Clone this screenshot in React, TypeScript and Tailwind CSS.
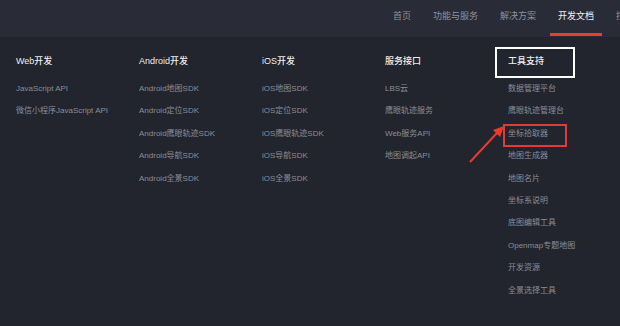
const nav = ["首页", "功能与服务", "解决方案", "开发文档", "控制台"];

const columns = [
  { title: "Web开发", items: ["JavaScript API", "微信小程序JavaScript API"] },
  {
    title: "Android开发",
    items: ["Android地图SDK", "Android定位SDK", "Android鹰眼轨迹SDK", "Android导航SDK", "Android全景SDK"],
  },
  {
    title: "iOS开发",
    items: ["iOS地图SDK", "iOS定位SDK", "iOS鹰眼轨迹SDK", "iOS导航SDK", "iOS全景SDK"],
  },
  { title: "服务接口", items: ["LBS云", "鹰眼轨迹服务", "Web服务API", "地图调起API"] },
  {
    title: "工具支持",
    items: [
      "数据管理平台",
      "鹰眼轨迹管理台",
      "坐标拾取器",
      "地图生成器",
      "地图名片",
      "坐标系说明",
      "底图编辑工具",
      "Openmap专题地图",
      "开发资源",
      "全景选择工具",
    ],
  },
];

export default function App() {
  return (
    <div
      className="relative h-[326px] w-[620px] overflow-hidden bg-[#22252d]"
      style={{ fontFamily: '"Liberation Sans", "Noto Sans CJK SC", sans-serif' }}
    >
      <header className="flex h-[37px] items-stretch gap-[6px] overflow-hidden whitespace-nowrap bg-[#292c37] pl-[385px]">
        {nav.map((n, i) => (
          <div
            key={n}
            className={`relative flex shrink-0 items-center px-2 pb-[3px] text-[9px] ${
              i === 3 ? "text-[#f2f2f2]" : "text-[#8d919b]"
            }`}
          >
            {n}
            {i === 3 && <span className="absolute bottom-[1px] left-0 right-0 h-[3px] bg-[#e5402f]" />}
          </div>
        ))}
      </header>

      <div className="flex pl-4 pt-[18px]">
        {columns.map((col, ci) => (
          <div key={col.title} className="flex w-[123px] shrink-0 flex-col gap-[11px]">
            <div className="relative text-[9px] font-medium leading-[12px] text-[#eeeeee]">
              {col.title}
              {ci === 4 && (
                <span className="absolute left-[-13px] top-[-8px] h-[31px] w-[80px] border-2 border-white" />
              )}
            </div>
            <ul className="flex flex-col">
              {col.items.map((it, ii) => (
                <li key={it} className="relative h-[22.4px] whitespace-nowrap text-[8px] leading-[22.4px] text-[#898d98]">
                  {it}
                  {ci === 4 && ii === 2 && (
                    <span className="absolute left-[-5px] top-[1px] h-[23px] w-[64px] border-2 border-[#e53935]" />
                  )}
                </li>
              ))}
            </ul>
          </div>
        ))}
      </div>

      <svg className="pointer-events-none absolute left-0 top-0" width="620" height="326">
        <line x1="470" y1="162" x2="497" y2="133" stroke="#ea3a2e" strokeWidth="2" />
        <polygon points="504,126 493,130 500,137" fill="#ea3a2e" />
      </svg>
    </div>
  );
}
